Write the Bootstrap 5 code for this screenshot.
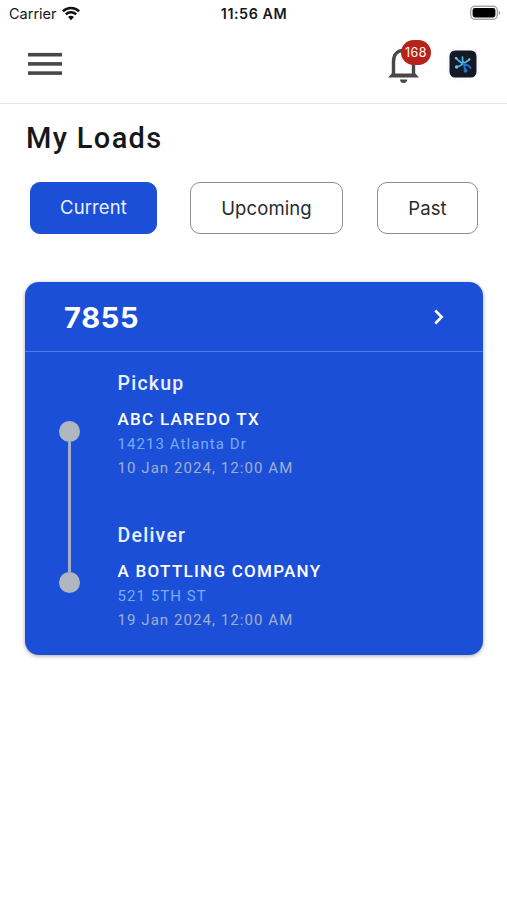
<!DOCTYPE html>
<html lang="en">
<head>
<meta charset="utf-8">
<meta name="viewport" content="width=device-width, initial-scale=1">
<title>My Loads</title>
<link href="https://cdn.jsdelivr.net/npm/bootstrap@5.3.0/dist/css/bootstrap.min.css" rel="stylesheet">
<style>
  :root { --brand: #1b4fd8; }
  body { font-family: Inter, "Liberation Sans", sans-serif; background: #fff; color: #16171a; min-height: 900px; }
  svg { display: block; flex: none; }
  .status-bar { height: 28px; padding: 0 6px 0 9px; font-size: 14.5px; line-height: 28px; display: grid; grid-template-columns: 1fr auto 1fr; }
  .status-bar .clock { font-weight: 600; font-size: 14.3px; letter-spacing: .55px; margin-right: 2px; }
  .wifi { margin: 0 0 2px 5px; }
  .app-header { height: 76px; padding: 0 29px 3px 28px; border-bottom: 1px solid #e6e6e8; }
  .icon-btn { border: 0; background: none; padding: 0; }
  .bell-btn { margin-top: -5px; }
  .avatar { margin-left: 27px; margin-right: -2px; }
  .bell-count { top: 0; left: 13px; width: 30px; height: 25px; border-radius: 13px; background: #b9221b; color: #fff; font-size: 12.5px; line-height: 25px; letter-spacing: .4px; }
  .page-title { font: 500 29px/36px Roboto, sans-serif; letter-spacing: 1.35px; margin: 16px 0 26px 26px; }
  .load-tabs { padding: 0 29px 0 30px; }
  .load-tabs .btn { height: 52px; padding: 0; border: 1.5px solid #8d8d8f; border-radius: 10px; color: #2a2b2e; font-size: 18.5px; line-height: 51px; letter-spacing: .1px; }
  .load-tabs .btn.active { background: var(--brand); border-color: var(--brand); color: #e9efff; padding-bottom: 2px; line-height: 47px; }
  .tab-current { width: 127px; } .tab-upcoming { width: 153px; margin-left: -1px; } .tab-past { width: 101px; }
  .load-card { margin: 48px 24px 0 25px; height: 373px; border: 0; border-radius: 14px; background: var(--brand); color: #fff; box-shadow: 0 1px 4px rgba(0,0,0,.35); }
  .load-head { height: 70px; padding: 0 39px; border-bottom: 1px solid #5379e2; }
  .load-number { font-size: 29px; font-weight: 700; line-height: 70px; letter-spacing: .7px; padding-top: 2px; }
  .stops { font-family: Roboto, sans-serif; padding-left: 34px; padding-top: 18px; }
  .route { width: 21px; margin: 50.5px 38px 0 -.5px; height: 172px; }
  .route .stop-dot { width: 21px; height: 21px; border-radius: 50%; background: #b0b7bf; flex: none; }
  .route .stop-line { width: 3px; background: #a5afc5; }
  .stop-info { height: 151.5px; padding-top: 1px; }
  .stop-kind { font-size: 19.5px; font-weight: 500; line-height: 26px; letter-spacing: 1.25px; margin-bottom: 10px; color: #e9efff; }
  .stop-name { font-size: 17px; font-weight: 500; line-height: 25px; letter-spacing: 1.27px; }
  .stop-addr, .stop-time { font-size: 15px; line-height: 24.3px; letter-spacing: 1.07px; color: #78abf6; }
  .stop-time { color: #a2afca; }
</style>
</head>
<body>
<div class="status-bar">
  <div class="d-flex align-items-center">
    <span>Carrier</span>
    <svg class="wifi" width="18" height="15" viewBox="0 0 18 15" fill="none" stroke="#111" stroke-width="2.5"><path d="M.9 5.3a11.6 11.6 0 0 1 16.2 0M3.8 8.4a7.4 7.4 0 0 1 10.4 0"/><path d="M9 14.2 6 11.1a4.3 4.3 0 0 1 6 0z" fill="#111" stroke="none"/></svg>
  </div>
  <span class="clock">11:56 AM</span>
  <div class="d-flex align-items-center justify-content-end">
    <svg class="mb-1" width="31" height="15" viewBox="0 0 31 15"><rect x=".7" y="1.2" width="26.6" height="13" rx="4" fill="#fff" stroke="#a5a5a5" stroke-width="1.4"/><rect x="2.6" y="3" width="22.8" height="9.4" rx="2.4" fill="#000"/><path d="M28.7 5.5v4.6q1.6-.7 1.6-2.3t-1.6-2.3" fill="#a5a5a5"/></svg>
  </div>
</div>
<header class="app-header d-flex align-items-center justify-content-between">
  <button class="icon-btn" aria-label="Menu">
    <svg width="34" height="24" viewBox="0 0 34 24" fill="#48484b"><rect y=".9" width="34" height="3.6"/><rect y="10.1" width="34" height="3.6"/><rect y="19.3" width="34" height="3.6"/></svg>
  </button>
  <div class="d-flex align-items-center">
    <button class="icon-btn bell-btn position-relative" aria-label="Notifications">
      <svg width="31" height="43" viewBox="0 0 31 43"><path d="M5.5 36V21.5C5.5 14.5 9.5 10.5 15.5 10.5S25.5 14.5 25.5 21.5V36" fill="none" stroke="#48484b" stroke-width="3.4"/><path d="M0 37.5 3.7 33.5H27.3L31 37.5ZM12 39.5H19.2Q18.8 43 15.6 43T12 39.5" fill="#48484b"/></svg>
      <span class="bell-count position-absolute text-center">168</span>
    </button>
    <svg class="avatar" width="34" height="34" viewBox="0 0 34 34"><circle cx="17" cy="17" r="17" fill="#fafafc"/><rect x="3.5" y="3.5" width="27" height="27" rx="5.5" fill="#141925"/>
      <g fill="none" stroke-linecap="round"><path d="m10 11 3 3 3.500 2.500M16.500 10v3.500l1.500 3M23.500 12.500l-5 3.500M10.500 20l4-1.500 3-2" stroke="#48b5e8" stroke-width="1.700"/><path d="m17.500 17 5 1.500 2 2.500M18 17.500l1.500 7" stroke="#2472c2" stroke-width="2"/></g>
      <g fill="#62c8ed"><circle cx="10.200" cy="11.300" r="1.300"/><circle cx="10.600" cy="20" r="1.700"/><circle cx="23.300" cy="12.400" r="1.100"/></g><circle cx="19.500" cy="23.700" r="1.900" fill="#2472c2"/></svg>
  </div>
</header>
<main>
  <h1 class="page-title">My Loads</h1>
  <div class="load-tabs d-flex justify-content-between">
    <button class="btn active tab-current">Current</button>
    <button class="btn tab-upcoming">Upcoming</button>
    <button class="btn tab-past">Past</button>
  </div>
  <article class="card load-card">
    <div class="load-head d-flex align-items-center justify-content-between">
      <span class="load-number">7855</span>
      <svg width="10" height="16" viewBox="0 0 10 16" fill="none" stroke="#fff" stroke-width="2.6"><path d="m1.300 1.500 6.400 6.500-6.400 6.500"/></svg>
    </div>
    <div class="stops d-flex">
      <div class="route d-flex flex-column align-items-center">
        <span class="stop-dot"></span><span class="stop-line flex-grow-1"></span><span class="stop-dot"></span>
      </div>
      <div>
        <div class="stop-info">
          <div class="stop-kind">Pickup</div>
          <div class="stop-name">ABC LAREDO TX</div>
          <div class="stop-addr">14213 Atlanta Dr</div>
          <div class="stop-time">10 Jan 2024, 12:00 AM</div>
        </div>
        <div class="stop-info">
          <div class="stop-kind">Deliver</div>
          <div class="stop-name">A BOTTLING COMPANY</div>
          <div class="stop-addr">521 5TH ST</div>
          <div class="stop-time">19 Jan 2024, 12:00 AM</div>
        </div>
      </div>
    </div>
  </article>
</main>
<script src="https://cdn.jsdelivr.net/npm/bootstrap@5.3.0/dist/js/bootstrap.bundle.min.js"></script>
</body>
</html>
